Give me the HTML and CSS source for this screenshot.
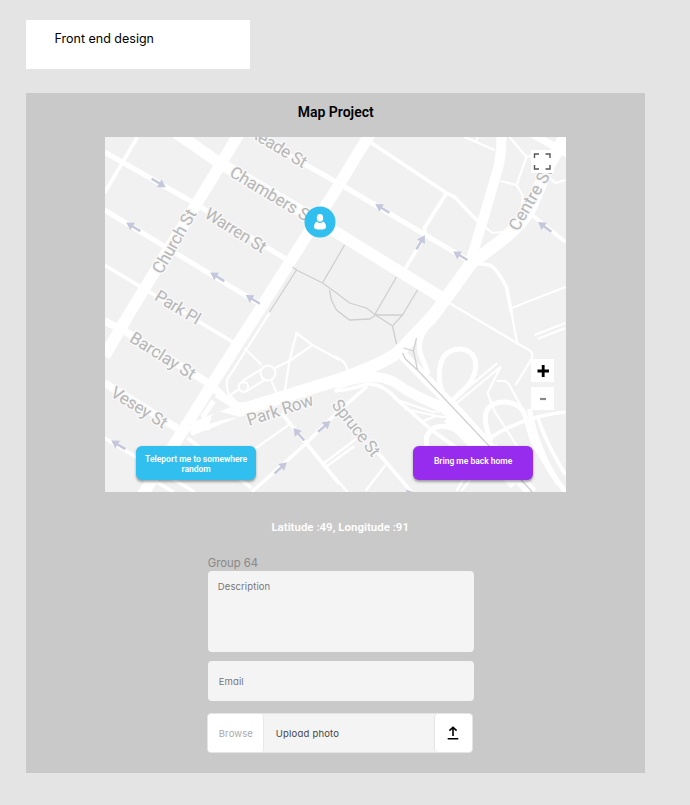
FILE: index.html
```html
<!DOCTYPE html>
<html lang="en">
<head>
<meta charset="utf-8">
<title>Map Project</title>
<link rel="stylesheet" href="styles.css">
</head>
<body>
<header class="note">Front end design</header>
<main class="panel">
  <h1 class="title">Map Project</h1>
  <section class="map">
    <svg class="map-art" viewBox="105.5 137 460.5 355" preserveAspectRatio="none">
      <defs>
        <path id="arrow" d="M-8-1.200H1V-4.500L8.500 0L1 4.500V1.200H-8Z"/>
      </defs>
      <rect x="105" y="137" width="462" height="356" fill="#f1f1f1"/>
      <g class="road w2">
        <path d="M270 313 228 379Q226 384 229 394L238 403H248L285 393 290 361 297 333 313 345"/>
        <path d="M245 348 262 365M275 368 290 361 313 345 340 360M272 381 277 393M240 389 229 396M262 369 243 381M265 380 247 391"/>
        <circle cx="268.500" cy="373" r="7.500"/><circle cx="244" cy="387" r="4.800"/>
        <path d="M252 451 292 423M322 465 358 438M325 468 355 446M336 478 348 492M366 491 386 465"/>
        <path d="M465 137 495 150M476 142 479 136M510 137 527 157 517 185 501 181M517 185 523 195V210M527 157 540 154M540 170 556 183 566 180"/>
        <path d="M448 302 470 315 531 351Q534 354 532 359L516 385M512 313 518 345M535 335 566 323M538 339 566 328"/>
        <path d="M512 308 566 287M484 226 493 233 503 232M452 401 498 363M456 404 501 367 488 393 495 411 520 450M497 381H505Q509 382 512 389L527 416"/>
        <path d="M335 356Q347 361 348 371M398 400 433 412 452 410M405 409 442 417M422 422 436 416 455 418"/>
        <path d="M457 491 465 477M462 491 473 477"/>
      </g>
      <g class="road w3">
        <path d="M372 143 447 193 455 197 482 225M447 193 425 228 426 235 405 270"/>
        <path d="M475 263 490 265Q496 267 507 287L512 313M530 213 566 242"/>
        <path d="M335 391 350 389 368 384Q383 383 398 400L432 430 460 450M492 437Q525 416 566 412M538 416Q545 440 566 475"/>
        <path d="M138 137 105 193M105 438 195 492M188 438 252 488M150 478 174 492"/>
        <path d="M105 265 235 343M252 492 305 445 335 415 368 386M282 413 340 484M372 445 412 492"/>
      </g>
      <g class="road w5">
        <path d="M105 152 198 205 288 260M105 210 265 307M250 133 342 185 468 260"/>
        <path d="M447 402Q436 382 442 361C448 346 471 344 476 361Q478 374 468 386L452 401"/>
        <path d="M492 441Q483 422 487 411C494 398 518 399 525 414L533 441 550 470 566 492"/>
        <path d="M427 450V437C432 424 448 421 468 438M435 320Q416 336 421 354L429 374"/>
        <path d="M214 401 204 416 209 430M217 395Q231 405 245 408"/>
        <path d="M530 409Q536 446 559 484M495 446 535 491"/>
      </g>
      <path class="road w7" d="M105 383 187 434M105 321 125 331 212 385Q225 400 240 408M533 134 568 154"/>
      <path class="road w10" d="M502 137Q502 160 496 177L482 225 470 264M335 385Q376 370 396 383C413 395 426 400 445 408L492 449 530 491M402 354 460 413 530 491M440 404 475 438 515 485M448 418 500 470"/>
      <path class="road w11" d="M177 133 220 163 320 222 443 298M240 133 222 163 130 313 105 356M371 133 335 192 258 313 212 385 143 495"/>
      <path class="road w13" d="M565 137 548 168 530 210Q523 224 500 242L472 263 435 314 402 349Q390 362 335 381L238 411 190 430"/>
      <path class="island" d="M218 411 241 417 222 420 210 424 212 416Z"/>
      <path class="trail" d="M293 267 297 270 270 312M297 270 323 283 337 293 350 303 367 308 376 315 393 326 403 315H378M345 245 323 283M330 290 332 300 337 310 350 320 370 319 378 314M397 277 375 315M418 290 403 315M393 326 397 344M417 338 414 351 418 370M404 348 414 351M403 353 406 359 418 370 533 492"/>
      <g class="arrows">
        <use href="#arrow" transform="translate(159 182.800) rotate(31)"/>
        <use href="#arrow" transform="translate(134 227) rotate(211)"/>
        <use href="#arrow" transform="translate(218 277) rotate(211)"/>
        <use href="#arrow" transform="translate(253.500 299.500) rotate(211)"/>
        <use href="#arrow" transform="translate(383 208.500) rotate(211)"/>
        <use href="#arrow" transform="translate(421 242.500) rotate(-59)"/>
        <use href="#arrow" transform="translate(461 255.800) rotate(211)"/>
        <use href="#arrow" transform="translate(545.500 227) rotate(217)"/>
        <use href="#arrow" transform="translate(119 445) rotate(211)"/>
        <use href="#arrow" transform="translate(299.500 434.500) rotate(229)"/>
        <use href="#arrow" transform="translate(324.500 426.500) rotate(-42)"/>
        <use href="#arrow" transform="translate(281 468) rotate(-42)"/>
        <use href="#arrow" transform="translate(412 496) rotate(229)"/>
      </g>
      <g class="streets">
        <text transform="translate(248.500 135.500) rotate(31)" textLength="64">Reade St</text>
        <text transform="translate(229 175.500) rotate(31)" textLength="95">Chambers St</text>
        <text transform="translate(204 217) rotate(32)" textLength="69">Warren St</text>
        <text transform="translate(162 275) rotate(-60)" textLength="71">Church St</text>
        <text transform="translate(154 299.500) rotate(31)" textLength="50">Park Pl</text>
        <text transform="translate(129 341) rotate(32)" textLength="74">Barclay St</text>
        <text transform="translate(110 395.500) rotate(32)" textLength="63">Vesey St</text>
        <text transform="translate(249.500 426) rotate(-18)" textLength="69">Park Row</text>
        <text transform="translate(331.500 405) rotate(52)" textLength="67">Spruce St</text>
        <text transform="translate(518.500 232) rotate(-60)" textLength="70">Centre St</text>
      </g>
    </svg>
    <svg class="pin" viewBox="0 0 32 32"><circle cx="16" cy="16" r="15.500" fill="#30bfef"/><ellipse cx="16" cy="11.800" rx="3.200" ry="3.900" fill="#fff"/><path d="M12.700 15.500Q16 18.500 19.300 15.500Q22 17 22 21Q22 23.600 16 23.600T10 21Q10 17 12.700 15.500Z" fill="#fff"/></svg>
    <div class="tile full"><svg viewBox="0 0 23 23"><path d="M3.500 8V4H8M14.500 4H19V8M19 15V19H14.500M8 19H3.500V15" fill="none" stroke="#555" stroke-width="1.400"/></svg></div>
    <div class="zoomers">
      <div class="tile"><svg viewBox="0 0 23 23"><path d="M6.500 12H18M12.200 6V18" stroke="#000" stroke-width="2.800"/></svg></div>
      <div class="tile"><svg viewBox="0 0 23 23"><path d="M9 12H15" stroke="#888" stroke-width="2.200"/></svg></div>
    </div>
    <div class="actions">
      <button class="btn blue">Teleport me to somewhere random</button>
      <button class="btn purple">Bring me back home</button>
    </div>
  </section>
  <p class="coords">Latitude :49, Longitude :91</p>
  <form class="form">
    <div class="group">Group 64</div>
    <div class="field description">Description</div>
    <div class="field email">Email</div>
    <div class="upload">
      <span class="browse">Browse</span>
      <span class="filename">Upload photo</span>
      <span class="send"><svg viewBox="0 0 12 14"><path d="M6 10V1.500M2.400 4.700 6 1.300 9.600 4.700M.7 12.800H11.300" fill="none" stroke="#000" stroke-width="1.600"/></svg></span>
    </div>
  </form>
</main>
</body>
</html>
```
FILE: styles.css
```css
* { box-sizing: border-box; }
body {
  margin: 0;
  padding: 20px 0 0 26px;
  height: 805px;
  overflow: hidden;
  background: #e4e4e4;
  font-family: Inter, sans-serif;
}
.note {
  width: 224.300px;
  height: 48.700px;
  padding: 10px 0 0 28.500px;
  background: #fff;
  font-size: 12.500px;
  line-height: 17px;
}
.panel {
  width: 619.400px;
  height: 680px;
  margin-top: 24.500px;
  padding-top: 9px;
  background: #c9c9c9;
}
.title {
  margin: 0;
  height: 34.800px;
  text-align: center;
  font: 600 14px/20px Roboto, sans-serif;
}
.map {
  position: relative;
  width: 460.500px;
  height: 355px;
  margin-left: 79.400px;
  overflow: hidden;
}
.map-art { display: block; width: 100%; height: 100%; }
.road { fill: none; stroke: #fff; stroke-linejoin: round; }
.w2 { stroke-width: 2.200; }
.w3 { stroke-width: 3.600; }
.w5 { stroke-width: 5; }
.w7 { stroke-width: 7.500; }
.w10 { stroke-width: 10; }
.w11 { stroke-width: 11.500; }
.w13 { stroke-width: 12.500; }
.island { fill: #f1f1f1; }
.trail { fill: none; stroke: #cfcfcf; stroke-width: 1.300; }
.arrows { fill: #c5c8dc; }
.streets {
  font: 17px Roboto, sans-serif;
  fill: #b6b6b6;
  stroke: #f8f8f8;
  stroke-width: 3px;
  stroke-linejoin: round;
  paint-order: stroke;
}
.pin { position: absolute; left: 199px; top: 69px; width: 32px; height: 32px; }
.tile { width: 23px; height: 23px; background: #fff; }
.tile svg { display: block; width: 23px; height: 23px; }
.full { position: absolute; left: 425.500px; top: 13px; }
.zoomers {
  position: absolute;
  left: 425.500px;
  top: 222px;
  display: grid;
  gap: 5.500px;
}
.actions {
  position: absolute;
  inset: auto 33px 11.500px 31px;
  display: flex;
  justify-content: space-between;
}
.btn {
  width: 119.500px;
  height: 34.500px;
  padding: 8px 5px 0;
  display: flex;
  align-items: flex-start;
  justify-content: center;
  border: 0;
  border-radius: 6px;
  color: #fff;
  font: 600 8.500px/10px Roboto, sans-serif;
  box-shadow: 0 1.500px 2.500px rgba(0, 0, 0, .35);
}
.blue { background: #30bfef; }
.purple { background: #982cee; padding-top: 10px; }
.coords {
  margin: 27.200px 0 0 9px;
  height: 36.800px;
  text-align: center;
  color: #fff;
  font: 600 11.500px/16px Roboto, sans-serif;
}
.form { width: 266px; margin-left: 181.800px; font-size: 9.500px; }
.group { height: 15px; color: #888; font-size: 11.300px; line-height: 14px; }
.field, .upload { color: #777; font-feature-settings: "cv11"; letter-spacing: .1px; }
.field { background: #f4f4f4; border-radius: 4px; }
.description { height: 81.500px; padding: 10px; line-height: 12px; }
.email { height: 40px; margin-top: 8.500px; padding-left: 11px; line-height: 41px; }
.upload {
  display: flex;
  width: 265.500px;
  height: 40px;
  margin: 12px 0 0 -.500px;
  border: .5px solid #e4e4e4;
  border-radius: 4px;
  background: #f4f4f4;
  line-height: 39px;
}
.browse { width: 56px; padding-left: 10.500px; background: #fff; color: #aaa; border-right: 1px solid #e8e8e8; border-radius: 3px; }
.filename { flex: 1; padding-left: 11.500px; color: #444; letter-spacing: .2px; }
.send {
  display: flex;
  width: 38px;
  align-items: center;
  justify-content: center;
  background: #fff;
  border-left: 1px solid #e4e4e4;
  border-radius: 4px;
}
.send svg { width: 12px; height: 14px; }
```
